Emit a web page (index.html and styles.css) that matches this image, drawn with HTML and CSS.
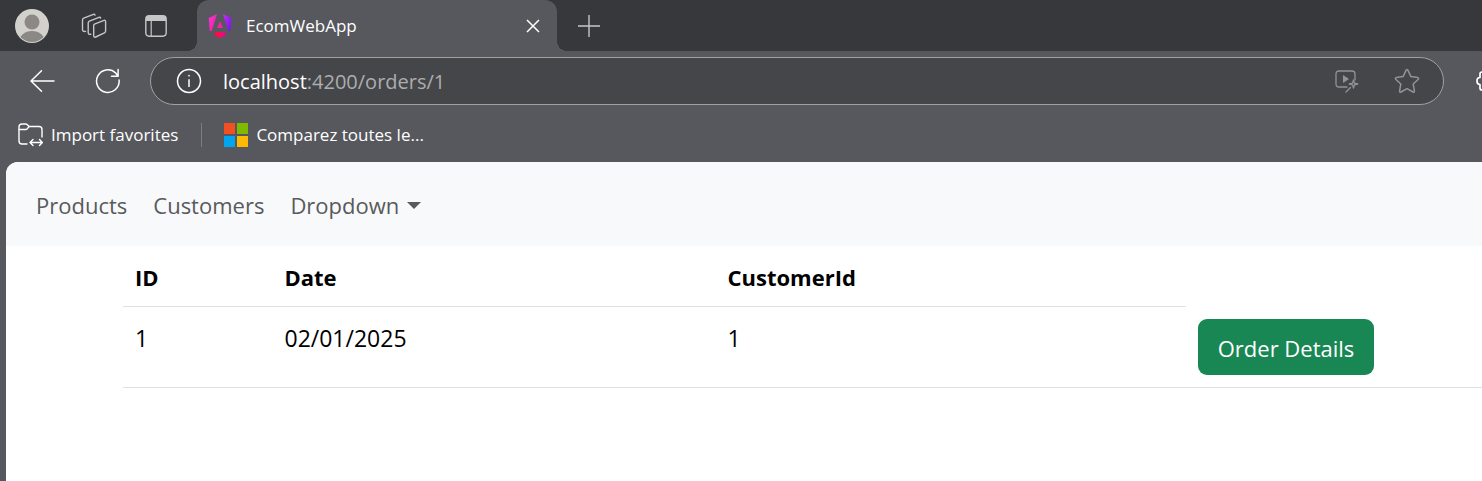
FILE: index.html
```html
<!DOCTYPE html>
<html lang="en">
<head>
<meta charset="utf-8">
<meta name="viewport" content="width=device-width, initial-scale=1">
<title>EcomWebApp</title>
<link rel="stylesheet" href="styles.css">
</head>
<body>
<header class="browser">
  <div class="tab-strip">
    <div class="strip-actions">
      <button class="icon-button" type="button" aria-label="Profile">
        <svg width="34" height="34" viewBox="0 0 34 34"><defs><clipPath id="face"><circle cx="17" cy="17" r="16"/></clipPath></defs><circle cx="17" cy="17" r="17" fill="#d3d1ce"/><g fill="#8b8886" clip-path="url(#face)"><circle cx="17" cy="13" r="7.5"/><ellipse cx="17" cy="33" rx="13" ry="11"/></g></svg>
      </button>
      <button class="icon-button" type="button" aria-label="Workspaces">
        <svg width="26" height="26" viewBox="0 0 26 26" fill="none" stroke="#c6c6c7" stroke-width="1.4" stroke-linejoin="round" stroke-linecap="round"><path d="M13.5 11.2 23 7.4Q24.6 7 24.6 8.6V18Q24.6 19.3 23.4 19.9L14.7 24Q12.7 24.7 12.7 22.6V12.6Q12.7 11.6 13.5 11.2Z"/><path d="M9.8 21.3Q7.2 21.8 7.2 19.6V10Q7.2 8.6 8.4 8.1L18 4.3Q19.3 4 19.6 5"/><path d="M4.6 18.4Q1.5 18.8 1.5 16.4V7Q1.5 5.6 2.7 5.1L12.4 1.4Q13.7 1.1 14 2.1"/></svg>
      </button>
      <button class="icon-button" type="button" aria-label="Tab actions">
        <svg width="22" height="22" viewBox="0 0 22 22"><rect x=".8" y=".8" width="20.4" height="20.4" rx="3.4" fill="none" stroke="#c6c6c7" stroke-width="1.4"/><path d="M1 4Q1 1 4 1H18Q21 1 21 4V6H1Z" fill="#c6c6c7"/><path d="M6.2 6V21" stroke="#c6c6c7" stroke-width="1.2"/></svg>
      </button>
    </div>
    <div class="tab">
      <svg width="24" height="24" viewBox="0 0 24 24"><defs><linearGradient id="pink" x1="0" x2="1" y1="0" y2="1"><stop offset="0" stop-color="#f03bd8"/><stop offset="1" stop-color="#ff10a0"/></linearGradient><linearGradient id="violet" x1="0" x2="1" y1="0" y2="1"><stop offset="0" stop-color="#d02bf4"/><stop offset="1" stop-color="#6a12f6"/></linearGradient></defs><path d="M.7 4 9 0 3.6 17.3 1.7 16.5Z" fill="url(#pink)"/><path d="M15 0 23.3 4 22.3 16.5 20.4 17.3Z" fill="url(#violet)"/><path d="M12 7 15 14H9Z" fill="#f51fa8"/><path d="M7.3 18H16.7L18 20.8 12 24 6 20.8Z" fill="#ff0a4f"/><path d="M12 18H16.7L18 20.8 15 22.4Z" fill="#e40a91"/></svg>
      <span class="tab-title">EcomWebApp</span>
      <button class="tab-close" type="button" aria-label="Close tab">
        <svg width="14" height="14" viewBox="0 0 14 14" fill="none" stroke="#fff" stroke-width="1.5"><path d="M1 1 13 13M13 1 1 13"/></svg>
      </button>
    </div>
    <button class="icon-button new-tab" type="button" aria-label="New tab">
      <svg width="22" height="22" viewBox="0 0 22 22" stroke="#c6c6c7" stroke-width="1.4"><path d="M11 0V22M0 11H22"/></svg>
    </button>
  </div>

  <div class="toolbar">
    <button class="tool-button" type="button" aria-label="Back">
      <svg width="26" height="26" viewBox="0 0 26 26" fill="none" stroke="#fff" stroke-width="1.5" stroke-linecap="round" stroke-linejoin="round"><path d="M12.5 2.8 2 13 12.5 23.2M2 13H25"/></svg>
    </button>
    <button class="tool-button" type="button" aria-label="Refresh">
      <svg width="26" height="26" viewBox="0 0 26 26" fill="none" stroke="#fff" stroke-width="1.5" stroke-linecap="round" stroke-linejoin="round"><path d="M24.1 12A11.3 11.3 0 1 1 20.7 5L23.1 8.2M23.1 1.5V8.2H16.5"/></svg>
    </button>
    <div class="address-bar">
      <svg width="26" height="26" viewBox="0 0 26 26" fill="none" stroke="#fff" stroke-width="1.5"><circle cx="13" cy="13" r="11.5"/><path d="M13 11.2V19"/><circle cx="13" cy="7.7" r=".6" fill="#fff" stroke-width=".6"/></svg>
      <div class="url" role="textbox" aria-label="Address" contenteditable="true" spellcheck="false"><span class="url-host">localhost</span>:4200/orders/1</div>
      <button class="icon-button" type="button" aria-label="Video tools">
        <svg width="24" height="24" viewBox="0 0 24 24" fill="none" stroke="#929396" stroke-width="1.3" stroke-linecap="round" stroke-linejoin="round"><path d="M12 18H4Q1 18 1 15V5Q1 2 4 2H17Q20 2 20 5V11"/><path d="M8 6 14 10 8 14Z" fill="#929396" stroke="none"/><path d="M18.5 10.8 19.4 14.1 22.7 15 19.4 15.9 18.5 19.2 17.6 15.9 14.3 15 17.6 14.1ZM15.5 18.5 11 23"/></svg>
      </button>
      <button class="icon-button" type="button" aria-label="Add to favorites">
        <svg width="26" height="26" viewBox="0 0 26 26" fill="none" stroke="#929396" stroke-width="1.5" stroke-linejoin="round"><path d="M12.1 2.1Q13 .8 13.9 2.1L16.9 8.6 23.8 9.6Q25.3 10 24.3 11.2L19.2 16 20.4 23Q20.4 24.6 19 24L13 20.7 7 24Q5.6 24.6 5.6 23L6.8 16 1.7 11.2Q.7 10 2.2 9.6L9.1 8.6Z"/></svg>
      </button>
    </div>
    <button class="extensions" type="button" aria-label="Extensions">
      <svg width="26" height="26" viewBox="0 0 26 26" fill="none" stroke="#fff" stroke-width="1.7" stroke-linejoin="round"><path d="M10 4H6Q4 4 4 6V9.5Q1 9.5 1 13T4 16.5V20Q4 22 6 22H20V4H16Q16 1 13 1T10 4Z"/></svg>
    </button>
  </div>

  <nav class="favorites" aria-label="Favorites">
    <a class="favorite" href="#">
      <svg width="25" height="24" viewBox="0 0 25 24" fill="none" stroke="#fff" stroke-width="1.4" stroke-linecap="round" stroke-linejoin="round"><path d="M9 21H4Q1 21 1 18V4Q1 1 4 1H7.5Q8.7 1 9.4 1.8L11 3.5H21Q24 3.5 24 6.5V14"/><path d="M1 6.5H7.5Q8.7 6.5 9.4 5.6L11 3.5M12.5 19.5H24M15 16.5 12 19.5 15 22.5M21.5 16.5 24.3 19.5 21.5 22.5"/></svg>
      Import favorites
    </a>
    <a class="favorite favorite-site" href="#">
      <svg width="24" height="24" viewBox="0 0 24 24"><path d="M0 0H11V11H0Z" fill="#f25022"/><path d="M13 0H24V11H13Z" fill="#7fba00"/><path d="M0 13H11V24H0Z" fill="#00a4ef"/><path d="M13 13H24V24H13Z" fill="#ffb900"/></svg>
      Comparez toutes le...
    </a>
  </nav>
</header>

<main class="page">
  <nav class="navbar" aria-label="Main">
    <a class="nav-link" href="#">Products</a>
    <a class="nav-link" href="#">Customers</a>
    <button class="nav-link dropdown" type="button" aria-haspopup="true">Dropdown</button>
  </nav>
  <div class="content">
    <table class="orders">
      <colgroup><col class="col-id"><col class="col-date"><col class="col-customer"><col></colgroup>
      <thead>
        <tr><th scope="col">ID</th><th scope="col">Date</th><th scope="col">CustomerId</th></tr>
      </thead>
      <tbody>
        <tr><td>1</td><td>02/01/2025</td><td>1</td><td class="actions"><button class="button-success" type="button">Order Details</button></td></tr>
      </tbody>
    </table>
  </div>
</main>
</body>
</html>
```
FILE: styles.css
```css
*, *::before, *::after {
  box-sizing: border-box;
}

body {
  margin: 0;
  min-height: 100vh;
  display: flex;
  flex-direction: column;
  overflow-x: hidden;
  background: #57585d;
  font-family: "Open Sans", "Noto Sans", sans-serif;
}

button {
  margin: 0;
  padding: 0;
  border: 0;
  background: none;
  color: inherit;
  font: inherit;
}

a {
  color: inherit;
  text-decoration: none;
}

svg {
  display: block;
  flex: none;
}

.tab-strip {
  display: flex;
  height: 51px;
  background: #37383b;
}

.strip-actions {
  display: flex;
  gap: 2px;
  padding: 0 11px 0 2px;
}

.icon-button {
  display: flex;
  flex: none;
  align-items: center;
  justify-content: center;
  width: 60px;
}

.new-tab {
  width: 64px;
}

.tab {
  position: relative;
  display: flex;
  align-items: center;
  gap: 14px;
  width: 360px;
  padding: 0 17px 0 11px;
  border-radius: 12px 12px 0 0;
  background: #57585d;
  color: #fff;
  font-size: 17px;
}

.tab::before,
.tab::after {
  content: "";
  position: absolute;
  bottom: 0;
  width: 10px;
  height: 10px;
}

.tab::before {
  right: 100%;
  background: radial-gradient(circle at 0 0, #37383b 10px, #57585d 10px);
}

.tab::after {
  left: 100%;
  background: radial-gradient(circle at 100% 0, #37383b 10px, #57585d 10px);
}

.tab-title {
  flex: 1;
}

.toolbar {
  display: flex;
  padding: 6px 0 6px 9px;
}

.tool-button {
  display: flex;
  flex: none;
  align-items: center;
  justify-content: center;
  width: 66px;
}

.address-bar {
  display: flex;
  flex: 1;
  align-items: center;
  height: 48px;
  margin-left: 9px;
  padding: 0 6px 0 25px;
  border: 1px solid #a0a1a3;
  border-radius: 24px;
  background: #454649;
}

.url {
  flex: 1;
  padding-left: 21px;
  color: #acadaf;
  font-size: 20px;
  outline: none;
}

.url-host {
  color: #fff;
}

.extensions {
  display: flex;
  flex: none;
  align-items: center;
  width: 38px;
  padding-left: 32px;
  overflow: hidden;
}

.favorites {
  display: flex;
  align-items: center;
  height: 51px;
  padding: 0 18px 4px;
  color: #fff;
  font-size: 17px;
}

.favorite {
  display: flex;
  align-items: center;
  gap: 8px;
}

.favorite-site {
  margin-left: 23px;
  padding-left: 22px;
  border-left: 1px solid #7b7c80;
}

.page {
  flex: 1;
  margin-left: 6px;
  border-radius: 12px 0 0 0;
  background: #fff;
  color: #000;
  font-size: 23px;
  line-height: 36px;
  overflow: hidden;
}

.navbar {
  display: flex;
  align-items: center;
  gap: 26px;
  padding: 25px 30px 23px;
  background: #f8f9fb;
  color: #595a5c;
  font-size: 22px;
}

.dropdown::after {
  content: "";
  display: inline-block;
  margin-left: 8px;
  vertical-align: 5px;
  border-top: 7px solid;
  border-right: 7px solid transparent;
  border-left: 7px solid transparent;
}

.content {
  padding-left: 117px;
}

.orders {
  width: 100%;
  border-collapse: separate;
  border-spacing: 0;
  table-layout: fixed;
}

.col-id {
  width: 11%;
}

.col-date {
  width: 32.6%;
}

.col-customer {
  width: 34.6%;
}

.orders th,
.orders td {
  padding: 13px 12px 11px;
  border-bottom: 1px solid #dee0e2;
  text-align: left;
  vertical-align: top;
}

.orders th {
  font-size: 22px;
}

.orders .actions {
  padding: 12px;
}

.button-success {
  display: block;
  padding: 11px 20px 9px;
  border-radius: 9px;
  background: #198754;
  color: #fff;
  font-size: 22px;
}
```
